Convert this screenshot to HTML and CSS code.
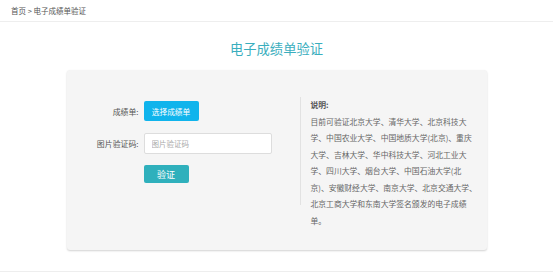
FILE: index.html
```html
<!DOCTYPE html>
<html lang="zh-CN">
<head>
  <meta charset="UTF-8">
  <meta name="viewport" content="width=device-width, initial-scale=1.0">
  <title>电子成绩单验证</title>
  <link rel="stylesheet" href="styles.css">
</head>
<body>
  <div class="crumbs">首页 &gt; 电子成绩单验证</div>

  <h1 class="page-title">电子成绩单验证</h1>

  <div class="verify-card">
    <div class="verify-form">
      <div class="form-row row-file">
        <label class="form-label">成绩单:</label>
        <button class="btn-choose">选择成绩单</button>
      </div>
      <div class="form-row row-code">
        <label class="form-label">图片验证码:</label>
        <input class="code-input" type="text" placeholder="图片验证码">
      </div>
      <div class="form-row row-submit">
        <span class="form-label"></span>
        <button class="btn-verify">验证</button>
      </div>
    </div>

    <div class="verify-note">
      <div class="note-title">说明:</div>
      <p>目前可验证北京大学、清华大学、北京科技大学、中国农业大学、中国地质大学(北京)、重庆大学、吉林大学、华中科技大学、河北工业大学、四川大学、烟台大学、中国石油大学(北京)、安徽财经大学、南京大学、北京交通大学、北京工商大学和东南大学签名颁发的电子成绩单。</p>
    </div>
  </div>

  <div class="page-foot"></div>
</body>
</html>
```

FILE: styles.css
```css
* {
  box-sizing: border-box;
  margin: 0;
  padding: 0;
  font-family: "Noto Sans CJK SC", "Noto Sans", sans-serif;
}

body {
  background: #fff;
  color: #555;
}

.crumbs {
  height: 22px;
  line-height: 21px;
  padding-left: 11px;
  font-size: 7.5px;
  color: #555;
  border-bottom: 1px solid #eee;
}

.page-title {
  margin-top: 17px;
  height: 20px;
  line-height: 20px;
  text-align: center;
  font-size: 13.3px;
  font-weight: normal;
  color: #3aaebe;
}

.verify-card {
  width: 420px;
  height: 180px;
  margin: 11px auto 0;
  padding-top: 27px;
  display: flex;
  background: #f5f5f5;
  border-radius: 3px;
  box-shadow: 0 1px 2px rgba(0,0,0,0.18);
}

.verify-form {
  width: 234px;
  height: 108px;
  padding-top: 4px;
  border-right: 1px solid #e2e2e2;
}

.form-row {
  display: flex;
  align-items: center;
  gap: 5px;
}

.row-file { height: 20px; margin-bottom: 12px; }
.row-code { height: 21px; margin-bottom: 11px; }
.row-submit { height: 18px; }

.form-label {
  width: 72px;
  text-align: right;
  font-size: 7.9px;
  color: #555;
}

.btn-choose {
  width: 55px;
  height: 20px;
  border: none;
  border-radius: 2px;
  background: #10b4ec;
  color: #fff;
  font-size: 7.7px;
}

.code-input {
  width: 128px;
  height: 21px;
  padding-left: 7px;
  border: 1px solid #ddd;
  border-radius: 2px;
  background: #fff;
  font-size: 7.5px;
  outline: none;
}

.code-input::placeholder {
  color: #aaa;
}

.btn-verify {
  width: 45px;
  height: 18px;
  border: none;
  border-radius: 2px;
  background: #2fb0bc;
  color: #fff;
  font-size: 9px;
}

.verify-note {
  padding-left: 10px;
  width: 186px;
  font-size: 7.8px;
  line-height: 16.5px;
  color: #666;
}

.verify-note p {
  width: 21.45em;
}

.note-title {
  font-weight: bold;
  color: #555;
}

.page-foot {
  margin-top: 21px;
  border-top: 1px solid #eee;
}
```
